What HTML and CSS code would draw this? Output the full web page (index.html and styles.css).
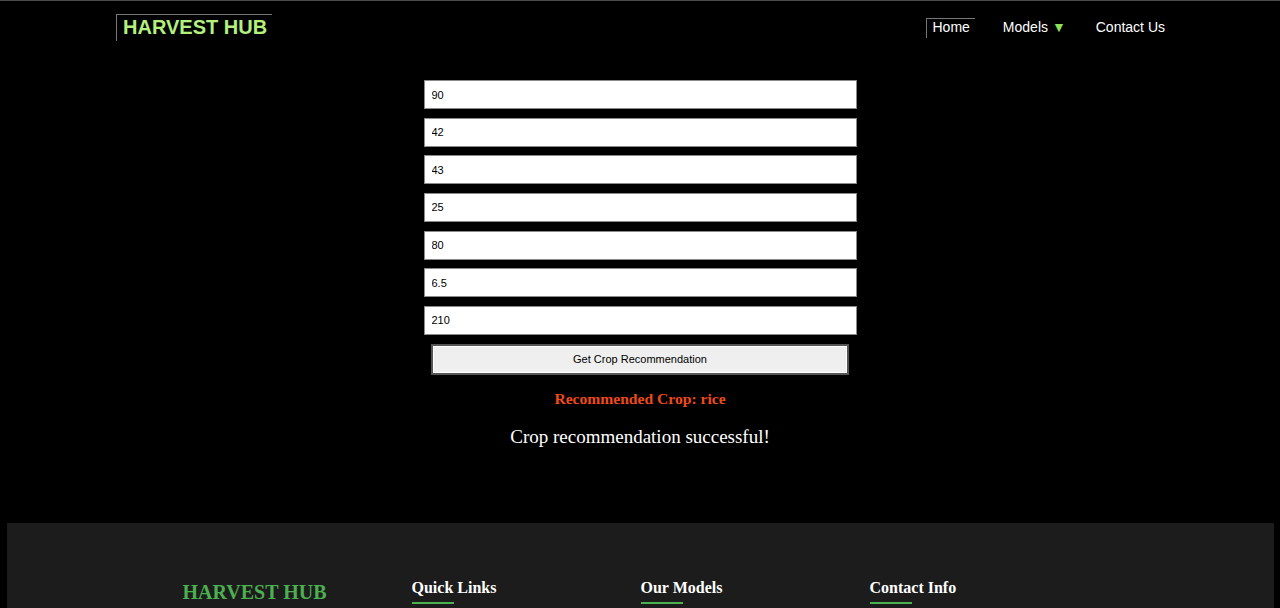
FILE: index.html
```html
<!DOCTYPE html>
<html lang="en">
<head>
<meta charset="utf-8">
<title>Harvest Hub - Crop Recommendation</title>
<link rel="stylesheet" href="styles.css">
</head>
<body>
<header class="site-header">
  <div class="header-inner">
    <a class="logo" href="#">HARVEST HUB</a>
    <nav class="main-nav">
      <a class="nav-link active" href="#">Home</a>
      <a class="nav-link" href="#">Models <span class="caret">▼</span></a>
      <a class="nav-link" href="#">Contact Us</a>
    </nav>
  </div>
</header>

<main class="content">
  <form class="crop-form">
    <input class="field" type="text" value="90">
    <input class="field" type="text" value="42">
    <input class="field" type="text" value="43">
    <input class="field" type="text" value="25">
    <input class="field" type="text" value="80">
    <input class="field" type="text" value="6.5">
    <input class="field" type="text" value="210">
    <button class="submit-btn" type="button">Get Crop Recommendation</button>
  </form>
  <p class="result">Recommended Crop: rice</p>
  <p class="status">Crop recommendation successful!</p>
</main>

<footer class="site-footer">
  <div class="footer-grid">
    <div class="footer-col">
      <div class="footer-brand">HARVEST HUB</div>
    </div>
    <div class="footer-col">
      <h3 class="footer-heading">Quick Links</h3>
    </div>
    <div class="footer-col">
      <h3 class="footer-heading">Our Models</h3>
    </div>
    <div class="footer-col">
      <h3 class="footer-heading">Contact Info</h3>
    </div>
  </div>
</footer>
</body>
</html>
```

FILE: styles.css
```css
html, body {
  margin: 0;
  padding: 0;
  background: #000;
}

body {
  font-family: "Liberation Serif", "Times New Roman", serif;
  color: #fff;
}

.site-header {
  border-top: 1px solid #4a4a4a;
  height: 55px;
}

.header-inner {
  display: flex;
  justify-content: space-between;
  align-items: flex-start;
  padding: 0 113px 0 116px;
}

.logo {
  margin-top: 13px;
  padding: 2px 5px 4px 6px;
  border-top: 1px solid #777;
  border-left: 1px solid #777;
  font-family: "Liberation Sans", Arial, sans-serif;
  font-weight: bold;
  font-size: 20px;
  line-height: 20px;
  color: #b4f07e;
  text-decoration: none;
}

.main-nav {
  display: flex;
  gap: 21px;
  margin-top: 17px;
}

.nav-link {
  font-family: "Liberation Sans", Arial, sans-serif;
  font-size: 14px;
  line-height: 16px;
  color: #fff;
  text-decoration: none;
  padding: 0 2px 3px 6px;
  border-top: 1px solid transparent;
  border-left: 1px solid transparent;
}

.nav-link.active {
  padding-right: 5px;
  border-top-color: #777;
  border-left-color: #777;
}

.caret {
  color: #8ee05a;
  font-size: 14px;
}

.content {
  display: flex;
  flex-direction: column;
  align-items: center;
  padding-top: 24px;
  height: 467px;
  box-sizing: border-box;
}

.crop-form {
  width: 433px;
  display: flex;
  flex-direction: column;
  align-items: center;
  gap: 8.67px;
}

.field {
  width: 100%;
  height: 29px;
  box-sizing: border-box;
  margin: 0;
  padding: 0 7px;
  border: 1px solid #8a8a8a;
  background: #fff;
  font-family: "Liberation Sans", Arial, sans-serif;
  font-size: 11px;
  color: #000;
}

.submit-btn {
  width: 418px;
  height: 31px;
  margin: 0;
  background: #efefef;
  border: 2px solid #555;
  box-shadow: inset 0 0 0 1px #fff;
  font-family: "Liberation Sans", Arial, sans-serif;
  font-size: 11px;
  color: #000;
}

.result {
  margin: 15px 0 0;
  font-weight: bold;
  font-size: 15.6px;
  line-height: 17px;
  color: #f04a17;
}

.status {
  margin: 19px 0 0;
  font-size: 19px;
  line-height: 22px;
  color: #fff;
}

.site-footer {
  background: #1c1c1c;
  margin: 0 6px 0 7px;
  padding: 56px 0 40px;
}

.footer-grid {
  width: 916px;
  margin: 0 auto;
  display: grid;
  grid-template-columns: repeat(4, 1fr);
}

.footer-brand {
  font-weight: bold;
  font-size: 20px;
  line-height: 24px;
  color: #4caf50;
  margin-top: 1px;
}

.footer-heading {
  margin: 0;
  font-size: 16px;
  line-height: 18px;
  font-weight: bold;
  color: #fff;
}

.footer-heading::after {
  content: "";
  display: block;
  width: 42px;
  height: 2px;
  background: #4caf50;
  margin-top: 5px;
}
```
